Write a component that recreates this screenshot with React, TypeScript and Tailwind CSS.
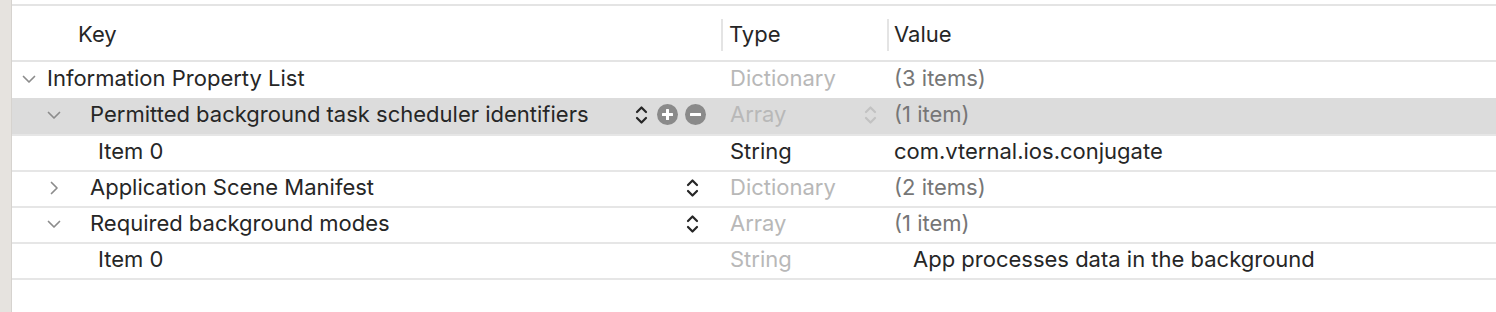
import React from "react";

type Row = {
  key: string;
  level: 0 | 1 | 2;
  disclosure?: "open" | "closed";
  type: string;
  typeDim: boolean;
  value: string;
  valueDim: boolean;
  valueIndent?: boolean;
  selected?: boolean;
  stepper?: boolean;
  border?: boolean;
};

const rows: Row[] = [
  { key: "Information Property List", level: 0, disclosure: "open", type: "Dictionary", typeDim: true, value: "(3 items)", valueDim: true },
  { key: "Permitted background task scheduler identifiers", level: 1, disclosure: "open", type: "Array", typeDim: true, value: "(1 item)", valueDim: true, selected: true, border: true },
  { key: "Item 0", level: 2, type: "String", typeDim: false, value: "com.vternal.ios.conjugate", valueDim: false, border: true },
  { key: "Application Scene Manifest", level: 1, disclosure: "closed", type: "Dictionary", typeDim: true, value: "(2 items)", valueDim: true, stepper: true, border: true },
  { key: "Required background modes", level: 1, disclosure: "open", type: "Array", typeDim: true, value: "(1 item)", valueDim: true, stepper: true, border: true },
  { key: "Item 0", level: 2, type: "String", typeDim: true, value: "App processes data in the background", valueDim: false, valueIndent: true, border: true },
];

const Chevron = ({ open }: { open: boolean }) => (
  <svg width="16" height="16" viewBox="0 0 16 16" className="text-[#8c8c8c]">
    {open ? (
      <path d="M2.5 5.5 L8 11 L13.5 5.5" fill="none" stroke="currentColor" strokeWidth="1.7" strokeLinecap="round" strokeLinejoin="round" />
    ) : (
      <path d="M5.5 2.5 L11 8 L5.5 13.5" fill="none" stroke="currentColor" strokeWidth="1.7" strokeLinecap="round" strokeLinejoin="round" />
    )}
  </svg>
);

const Stepper = ({ dim }: { dim?: boolean }) => (
  <svg width="13" height="20" viewBox="0 0 13 20" className={dim ? "text-[#c2c2c2]" : "text-[#262626]"}>
    <path d="M2 7 L6.5 2.5 L11 7" fill="none" stroke="currentColor" strokeWidth="2.2" strokeLinecap="round" strokeLinejoin="round" />
    <path d="M2 13 L6.5 17.5 L11 13" fill="none" stroke="currentColor" strokeWidth="2.2" strokeLinecap="round" strokeLinejoin="round" />
  </svg>
);

const CircleBtn = ({ plus }: { plus?: boolean }) => (
  <svg width="21" height="21" viewBox="0 0 21 21">
    <circle cx="10.5" cy="10.5" r="10.5" fill="#8a8a8a" />
    <rect x="5" y="9" width="11" height="3" rx="0.5" fill="#fff" />
    {plus && <rect x="9" y="5" width="3" height="11" rx="0.5" fill="#fff" />}
  </svg>
);

const levelPad = { 0: "pl-[9px]", 1: "pl-[34px]", 2: "pl-[86px]" } as const;

export default function App() {
  return (
    <div
      className="flex w-[1496px] h-[312px] bg-white overflow-hidden text-[22px] text-[#262626]"
      style={{ fontFamily: "Inter, 'Noto Sans', sans-serif" }}
    >
      {/* sidebar strip */}
      <div className="w-[12px] shrink-0 bg-[#e6e3df] border-r border-[#d6d3cf]" />

      <div className="flex-1 flex flex-col pt-[4px]">
        {/* header */}
        <div className="border-t-2 border-b-2 border-[#e4e4e4] h-[58px] flex items-center pt-[3px]">
          <div className="w-[709px] pl-[66px]">Key</div>
          <div className="w-[166px] flex items-center h-[32px] border-l-2 border-[#e4e4e4] pl-[6px]">Type</div>
          <div className="flex-1 flex items-center h-[32px] border-l-2 border-[#e4e4e4] pl-[5px]">Value</div>
        </div>

        {rows.map((r, i) => (
          <div
            key={i}
            className={`flex items-center pb-[3px] ${r.selected ? "h-[38px] bg-[#dcdcdc]" : "h-[36px]"} ${
              r.border ? "border-b-2 border-[#e6e6e6]" : ""
            } ${i === 0 ? "h-[34px]" : ""}`}
          >
            <div className={`w-[709px] flex items-center ${levelPad[r.level]}`}>
              {r.level < 2 && (
                <span className={`w-[16px] flex justify-center ${r.level === 0 ? "mr-[10px]" : "mr-[28px]"}`}>
                  {r.disclosure && <Chevron open={r.disclosure === "open"} />}
                </span>
              )}
              <span className="flex-1 whitespace-nowrap">{r.key}</span>
              {r.selected && (
                <span className="flex items-center mr-[15px]">
                  <Stepper />
                  <span className="ml-[9px] flex items-center gap-[7px]">
                    <CircleBtn plus />
                    <CircleBtn />
                  </span>
                </span>
              )}
              {r.stepper && (
                <span className="flex items-center mr-[22px]">
                  <Stepper />
                </span>
              )}
            </div>
            <div className={`w-[166px] flex items-center pl-[9px] ${r.typeDim ? "text-[#b8b8b8]" : ""}`}>
              <span className="flex-1">{r.type}</span>
              {r.selected && (
                <span className="mr-[10px] flex items-center">
                  <Stepper dim />
                </span>
              )}
            </div>
            <div className={`flex-1 ${r.valueIndent ? "pl-[26px]" : "pl-[7px]"} ${r.valueDim ? "text-[#767676]" : ""}`}>
              {r.value}
            </div>
          </div>
        ))}
      </div>
    </div>
  );
}
